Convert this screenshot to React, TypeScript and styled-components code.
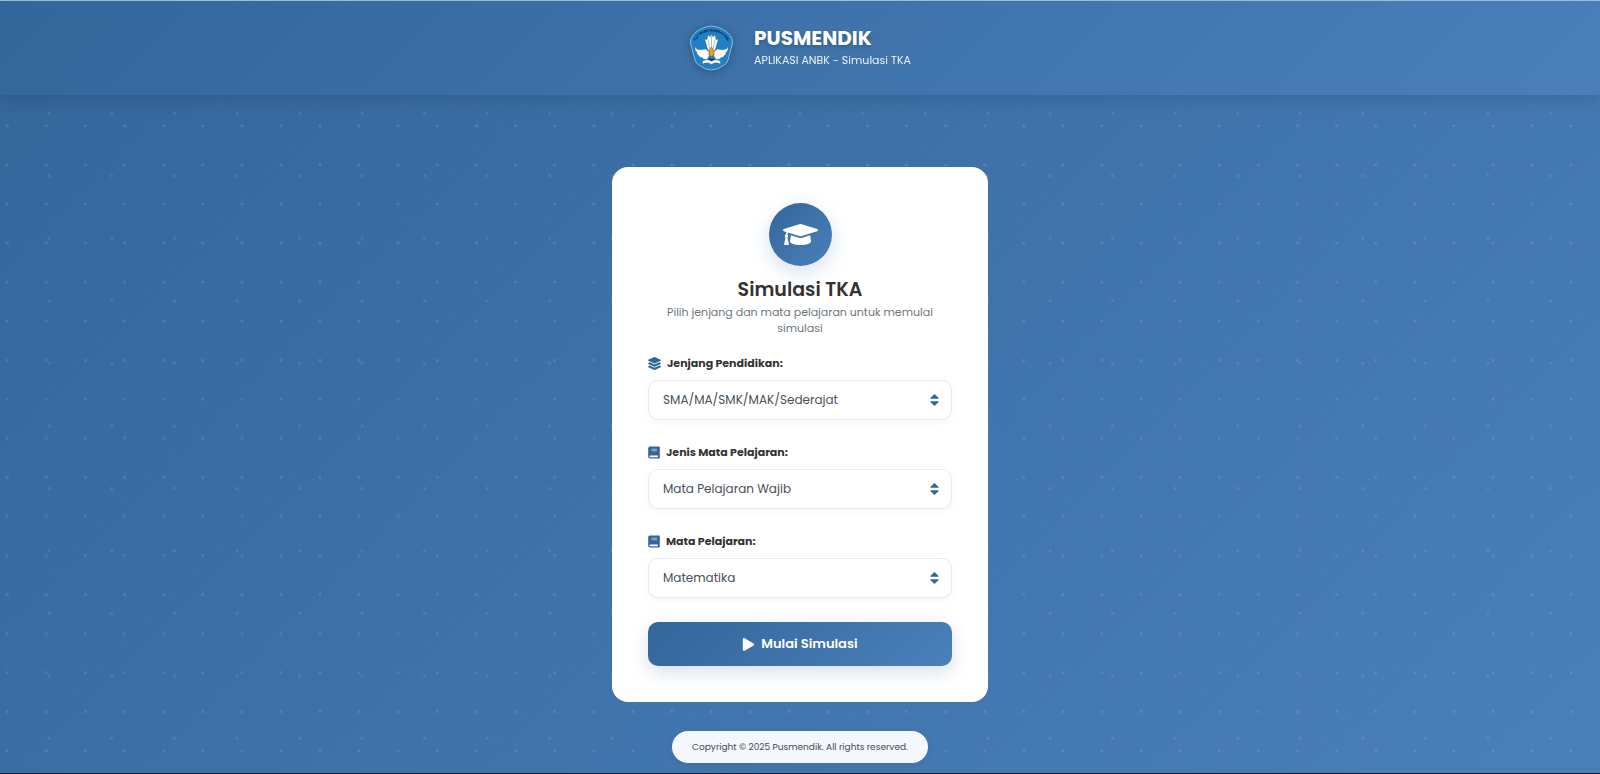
import React from "react";
import styled, { createGlobalStyle } from "styled-components";
import { FaGraduationCap, FaLayerGroup, FaPlay } from "react-icons/fa";

const GlobalStyle = createGlobalStyle`
  *, *::before, *::after { box-sizing: border-box; }
  body {
    margin: 0;
    font-family: Poppins, Inter, "Open Sans", sans-serif;
    color: #333;
  }
`;

const brandGradient = "linear-gradient(135deg, #336699, #4a7fba)";

const Page = styled.div`
  position: relative;
  isolation: isolate;
  display: flex;
  flex-direction: column;
  min-height: 100vh;
  border-top: 1px solid #a3c3da;
  border-bottom: 1px solid #0a1826;
  background: ${brandGradient};
`;

const Backdrop = styled.svg`
  position: absolute;
  inset: 0;
  z-index: -1;
  width: 100%;
  height: 100%;
`;

const Header = styled.header`
  display: flex;
  align-items: center;
  justify-content: center;
  gap: 20px;
  padding: 24px 20px;
  background: ${brandGradient};
  box-shadow: 0 4px 16px rgba(0, 0, 0, 0.12);
`;

const Logo = styled.svg`
  width: 45px;
  height: 46px;
  filter: drop-shadow(0 2px 4px rgba(0, 0, 0, 0.25));
`;

const Brand = styled.div`
  color: #fff;
`;

const BrandName = styled.h1`
  margin: 0;
  font-size: 20px;
  line-height: 25px;
  font-weight: 700;
  text-shadow: 0 2px 4px rgba(0, 0, 0, 0.2);
`;

const BrandNote = styled.p`
  margin: 0;
  font-size: 11px;
  line-height: 19px;
  opacity: 0.9;
`;

const Main = styled.main`
  display: flex;
  flex: 1;
  flex-direction: column;
  align-items: center;
  gap: 29px;
  padding: 72px 16px 10px;
`;

const Card = styled.section`
  width: 100%;
  max-width: 376px;
  padding: 36px;
  border-radius: 16px;
  background: #fff;
`;

const Intro = styled.header`
  display: flex;
  flex-direction: column;
  align-items: center;
  margin-bottom: 19px;
  text-align: center;
`;

const Emblem = styled.span`
  display: grid;
  place-items: center;
  width: 63px;
  height: 63px;
  margin-bottom: 12px;
  border-radius: 50%;
  background: ${brandGradient};
  box-shadow: 0 6px 20px rgba(51, 102, 153, 0.2);
  color: #fff;
  font-size: 35px;
`;

const Title = styled.h2`
  margin: 0;
  font-size: 19px;
  line-height: 24px;
  font-weight: 600;
`;

const Subtitle = styled.p`
  max-width: 280px;
  margin: 2px 0 0;
  color: #6c757d;
  font-size: 11px;
  line-height: 16px;
`;

const Form = styled.form`
  display: flex;
  flex-direction: column;
  gap: 24px;
`;

const Field = styled.div`
  display: flex;
  flex-direction: column;
  gap: 8px;
`;

const Label = styled.label`
  display: flex;
  align-items: center;
  gap: 6px;
  font-size: 11px;
  line-height: 17px;
  font-weight: 700;

  svg {
    height: 13px;
    color: #336699;
  }
`;

const LayersIcon = styled(FaLayerGroup)`
  width: 13px;
`;

const BookDrawing = styled.svg`
  width: 12px;
`;

const SelectBox = styled.div`
  display: grid;
  align-items: center;

  > * {
    grid-area: 1 / 1;
  }
`;

const Select = styled.select`
  width: 100%;
  height: 40px;
  padding: 0 36px 0 14px;
  border: 1px solid #e6ecf3;
  border-radius: 10px;
  appearance: none;
  background: #fff;
  box-shadow: 0 2px 6px rgba(51, 102, 153, 0.06);
  color: #495057;
  font: 400 12px/20px Poppins, Inter, "Open Sans", sans-serif;
`;

const Arrows = styled.svg`
  justify-self: end;
  width: 9px;
  height: 12px;
  margin-right: 13px;
  fill: #336699;
  pointer-events: none;
`;

const StartButton = styled.button`
  display: flex;
  align-items: center;
  justify-content: center;
  gap: 6px;
  height: 44px;
  border: 0;
  border-radius: 10px;
  background: ${brandGradient};
  box-shadow: 0 6px 18px rgba(51, 102, 153, 0.2);
  color: #fff;
  font: 600 13px/20px Poppins, Inter, "Open Sans", sans-serif;
`;

const Footer = styled.footer`
  padding: 8px 20px;
  border-radius: 16px;
  background: #f4f7fb;
  box-shadow: 0 2px 8px rgba(0, 0, 0, 0.06);
  color: #444b52;
  font-size: 9px;
  line-height: 16px;
`;

const dotLayers = [
  { id: "dots-near", w: 39.1, h: 39.05, x: 7.2, y: 125, r: 1.4, opacity: 0.16 },
  { id: "dots-wide", w: 62.55, h: 62.5, x: 49.3, y: 112.3, r: 1.5, opacity: 0.13 },
  { id: "dots-fine", w: 23.46, h: 23.43, x: 8.7, y: 103, r: 0.9, opacity: 0.04 },
];

function DotBackdrop() {
  return (
    <Backdrop aria-hidden="true">
      <defs>
        {dotLayers.map((d) => (
          <pattern
            key={d.id}
            id={d.id}
            width={d.w}
            height={d.h}
            x={d.x - d.w / 2}
            y={d.y - d.h / 2}
            patternUnits="userSpaceOnUse"
          >
            <circle cx={d.w / 2} cy={d.h / 2} r={d.r} fill="#d0e6ff" fillOpacity={d.opacity} />
          </pattern>
        ))}
      </defs>
      {dotLayers.map((d) => (
        <rect key={d.id} width="100%" height="100%" fill={`url(#${d.id})`} />
      ))}
    </Backdrop>
  );
}

function BookIcon() {
  return (
    <BookDrawing viewBox="0 0 12 13" aria-hidden="true">
      <path
        d="M2 0.4 H11 Q11.8 0.4 11.8 1.2 V11.8 Q11.8 12.6 11 12.6 H2 Q0.2 12.6 0.2 10.8 V2.2 Q0.2 0.4 2 0.4Z"
        fill="currentColor"
      />
      <path d="M3.5 3.2 H9 M3.5 4.8 H9" stroke="#b9cde0" strokeWidth="0.8" />
      <path d="M2.3 9.6 H9.8 V11.2 H2.3 Q1.5 11.2 1.5 10.4 Q1.5 9.6 2.3 9.6Z" fill="#fff" />
    </BookDrawing>
  );
}

function MinistryLogo() {
  return (
    <Logo viewBox="0 0 90 92" role="img" aria-label="Tut Wuri Handayani">
      <path
        d="M45 2 C58 3 73 10 81 19 Q88 27 87 36 L78 70 Q76 78 69 81 Q57 90 45 90 Q33 90 21 81 Q14 78 12 70 L3 36 Q2 27 9 19 C17 10 32 3 45 2Z"
        fill="#1f80c6"
        stroke="#8dbbe0"
        strokeWidth="2"
      />
      <path id="motto" d="M12 38 C16 21 30 13 45 13 S74 21 78 38" fill="none" />
      <text fill="#0c2740" fontSize="7" fontWeight="700" textAnchor="middle">
        <textPath href="#motto" startOffset="50%">
          TUT WURI HANDAYANI
        </textPath>
      </text>
      <g fill="#fff" stroke="#33566f" strokeWidth="0.8">
        <path d="M12 43 Q16 53 33 48 L40 53 Q42 63 36 69 Q28 70 26 65 Q20 66 20 61 Q15 60 16 55 Q11 52 12 43Z" />
        <path d="M78 43 Q74 53 57 48 L50 53 Q48 63 54 69 Q62 70 64 65 Q70 66 70 61 Q75 60 74 55 Q79 52 78 43Z" />
        <path d="M38 51 L32 31 Q32 26 36 29 L37 23 Q40 18 42 24 Q45 14 48 24 Q51 18 53 23 L54 29 Q59 26 58 31 L52 51Z" />
        <path d="M38 29 L42 49 M45 21 V49 M52 29 L48 49" fill="none" />
        <path d="M27 72 Q38 67 45 72 Q52 67 63 72 V78 Q52 73 45 79 Q38 73 27 78Z" />
      </g>
      <path d="M39 65 Q45 71 51 65 V69 Q45 74 39 69Z" fill="#17354e" />
      <path d="M45 44 Q51 51 50 57 Q49 62 45 63 Q41 62 40 57 Q39 51 45 44Z" fill="#f0a224" stroke="#745328" strokeWidth="1" />
    </Logo>
  );
}

type SelectFieldProps = {
  id: string;
  label: string;
  icon: React.ReactNode;
  value: string;
};

function SelectField({ id, label, icon, value }: SelectFieldProps) {
  return (
    <Field>
      <Label htmlFor={id}>
        {icon}
        {label}
      </Label>
      <SelectBox>
        <Select id={id} defaultValue={value}>
          <option>{value}</option>
        </Select>
        <Arrows viewBox="0 0 9 12" aria-hidden="true">
          <path d="M4.5 0 L8.7 4 Q9 4.8 8.2 4.8 H0.8 Q0 4.8 0.3 4Z M4.5 12 L8.7 8 Q9 7.2 8.2 7.2 H0.8 Q0 7.2 0.3 8Z" />
        </Arrows>
      </SelectBox>
    </Field>
  );
}

export default function App() {
  return (
    <>
      <GlobalStyle />
      <Page>
        <DotBackdrop />
        <Header>
          <MinistryLogo />
          <Brand>
            <BrandName>PUSMENDIK</BrandName>
            <BrandNote>APLIKASI ANBK - Simulasi TKA</BrandNote>
          </Brand>
        </Header>
        <Main>
          <Card>
            <Intro>
              <Emblem>
                <FaGraduationCap />
              </Emblem>
              <Title>Simulasi TKA</Title>
              <Subtitle>Pilih jenjang dan mata pelajaran untuk memulai simulasi</Subtitle>
            </Intro>
            <Form onSubmit={(e) => e.preventDefault()}>
              <SelectField
                id="jenjang"
                label="Jenjang Pendidikan:"
                icon={<LayersIcon />}
                value="SMA/MA/SMK/MAK/Sederajat"
              />
              <SelectField id="jenis" label="Jenis Mata Pelajaran:" icon={<BookIcon />} value="Mata Pelajaran Wajib" />
              <SelectField id="mapel" label="Mata Pelajaran:" icon={<BookIcon />} value="Matematika" />
              <StartButton type="submit">
                <FaPlay />
                Mulai Simulasi
              </StartButton>
            </Form>
          </Card>
          <Footer>Copyright © 2025 Pusmendik. All rights reserved.</Footer>
        </Main>
      </Page>
    </>
  );
}
